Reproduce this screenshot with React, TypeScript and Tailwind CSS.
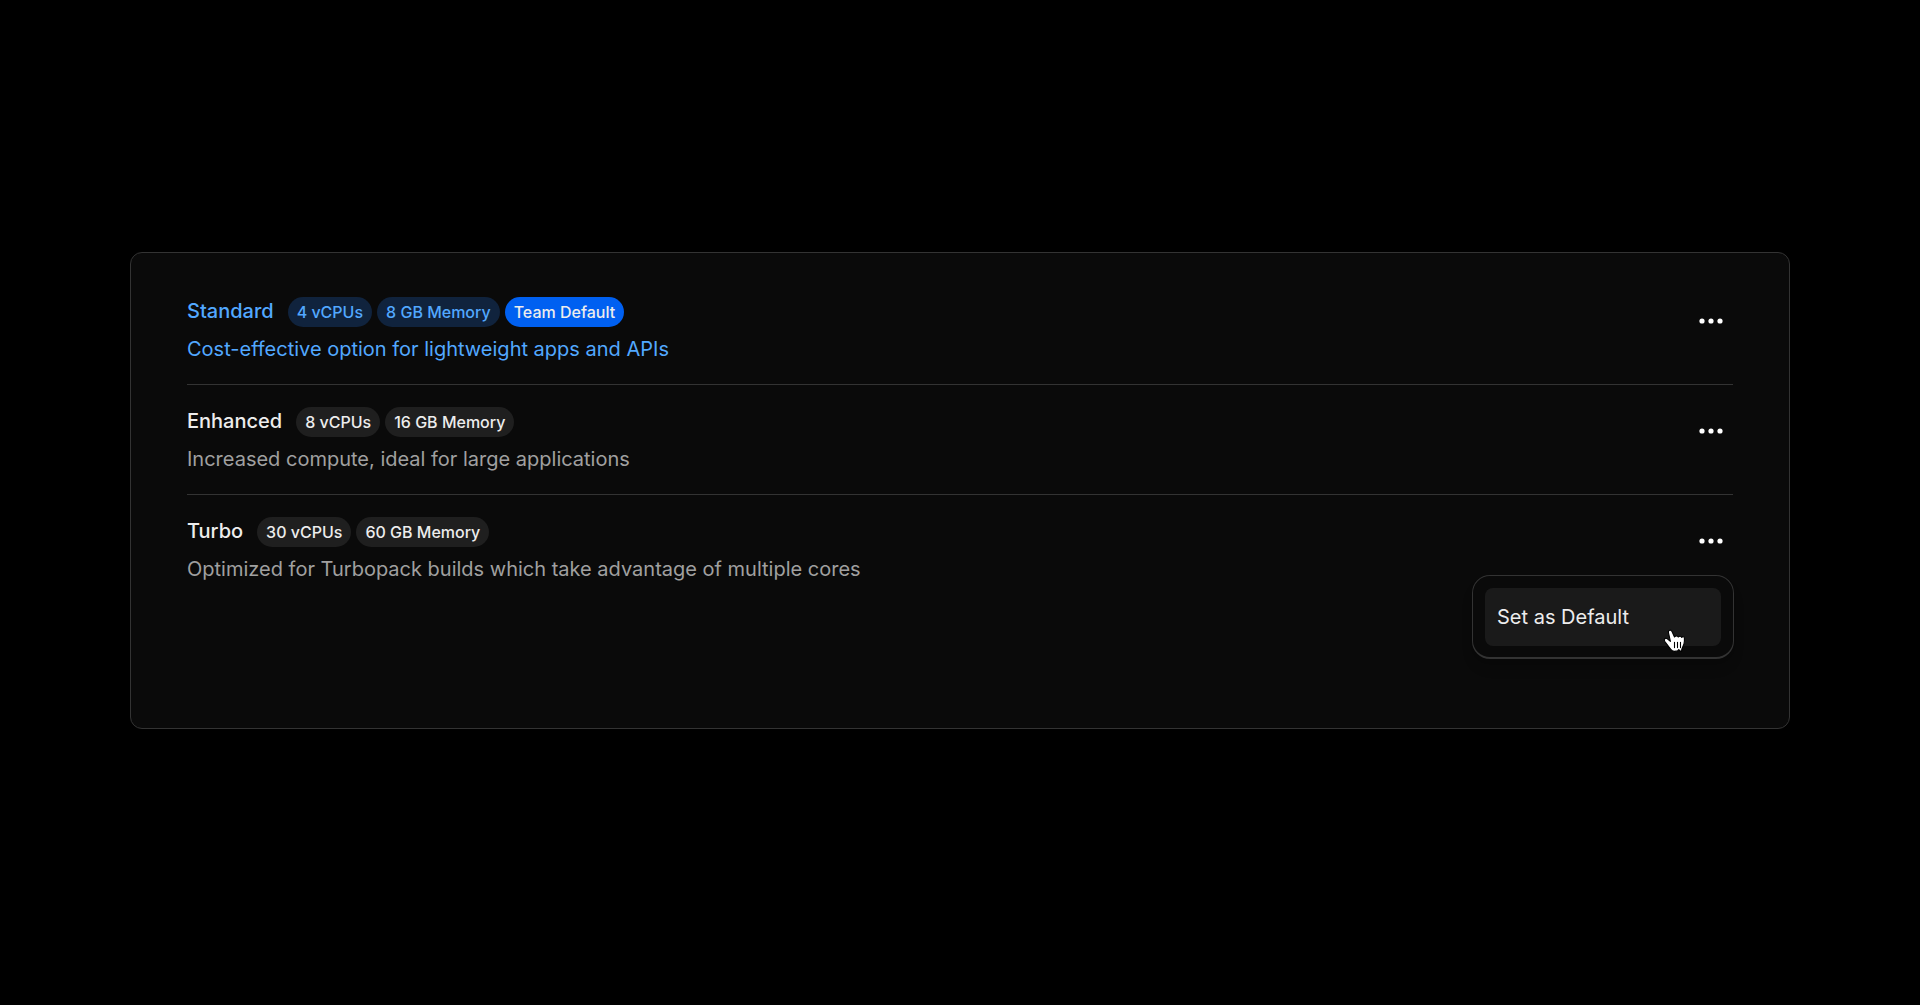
type Plan = {
  name: string;
  specs: string[];
  description: string;
  isDefault?: boolean;
};

const plans: Plan[] = [
  {
    name: "Standard",
    specs: ["4 vCPUs", "8 GB Memory"],
    description: "Cost-effective option for lightweight apps and APIs",
    isDefault: true,
  },
  {
    name: "Enhanced",
    specs: ["8 vCPUs", "16 GB Memory"],
    description: "Increased compute, ideal for large applications",
  },
  {
    name: "Turbo",
    specs: ["30 vCPUs", "60 GB Memory"],
    description: "Optimized for Turbopack builds which take advantage of multiple cores",
  },
];

function DotsIcon() {
  return (
    <svg width="24" height="24" viewBox="0 0 24 24" fill="currentColor" aria-hidden="true">
      <circle cx="3" cy="12" r="2.6" />
      <circle cx="12" cy="12" r="2.6" />
      <circle cx="21" cy="12" r="2.6" />
    </svg>
  );
}

function HandCursor() {
  return (
    <svg
      className="pointer-events-none absolute right-[46px] bottom-[3px] z-20"
      width="24"
      height="26"
      viewBox="0 0 24 26"
      aria-hidden="true"
    >
      <path
        d="M6.6 2.2C5.5 2.5 5.2 3.5 5.5 4.8L7.4 13.4L4.4 10.9C3.3 10 1.8 10.2 1.4 11.2C1 12.1 1.5 13 2.2 14L6.4 19.6C7.3 20.8 8 21.8 9.4 22.8C10.6 23.6 13 23.3 14.6 22.9L15.8 21.6L17.2 23.1H18.6C18.4 21.5 18.9 20.6 19.8 18.8C20.8 16.8 21.4 15 21.4 13V10C21.4 8.6 19.4 8.2 18.7 9.4C18.2 7.9 16 7.8 15.3 9.1C14.7 7.7 12.4 7.6 11.5 9L9 3.6C8.5 2.4 7.6 1.9 6.6 2.2Z"
        fill="#fff"
        stroke="#000"
        strokeWidth="1.1"
        strokeLinejoin="round"
      />
      <path d="M11.5 14.2V19.6M14.5 14.2V19.6M17.5 14.2V19.6" stroke="#000" strokeWidth="1.1" strokeLinecap="round" />
    </svg>
  );
}

function Pill({ label, tone }: { label: string; tone: string }) {
  return (
    <span className={`flex h-[30px] items-center rounded-full px-[9px] text-base font-medium ${tone}`}>{label}</span>
  );
}

function PlanRow({ plan, menuOpen }: { plan: Plan; menuOpen: boolean }) {
  const active = plan.isDefault;
  return (
    <li className="flex items-center justify-between border-b border-[#333] pt-[22px] pb-[21px] last:border-transparent">
      <div>
        <div className="flex items-start gap-3.5">
          <h2 className={`text-xl leading-7 font-medium ${active ? "text-[#52a8ff]" : "text-[#ededed]"}`}>
            {plan.name}
          </h2>
          <div className="flex gap-[5px]">
            {plan.specs.map((spec) => (
              <Pill
                key={spec}
                label={spec}
                tone={active ? "bg-[#10233d] text-[#52a8ff]" : "bg-[#1f1f1f] text-[#ededed]"}
              />
            ))}
            {active && <Pill label="Team Default" tone="bg-[#0060f1] text-[#ededed]" />}
          </div>
        </div>
        <p className={`mt-2 text-xl leading-7 ${active ? "text-[#52a8ff]" : "text-[#a0a0a0]"}`}>
          {plan.description}
        </p>
      </div>
      <div className="relative -mt-[18px] flex">
        <button type="button" aria-label={`Options for ${plan.name}`} className="px-2.5 py-1 text-white">
          <DotsIcon />
        </button>
        {menuOpen && (
          <div className="absolute top-full -right-px z-10 mt-[18px] w-[262px] rounded-[18px] border border-b-2 border-[#333] bg-[#0a0a0a] px-3 pt-3 pb-[11px] shadow-lg">
            <button
              type="button"
              className="block h-[58px] w-full cursor-pointer rounded-lg bg-[#1a1a1a] px-3 text-left text-xl text-[#ededed]"
            >
              Set as Default
            </button>
            <HandCursor />
          </div>
        )}
      </div>
    </li>
  );
}

export default function App() {
  return (
    <main className="min-h-screen bg-black px-[130px] pt-[252px] font-['Inter',sans-serif]">
      <section className="rounded-xl border border-[#333] bg-[#0a0a0a] px-14 pt-[22px] pb-[123px]">
        <ul>
          {plans.map((plan) => (
            <PlanRow key={plan.name} plan={plan} menuOpen={plan.name === "Turbo"} />
          ))}
        </ul>
      </section>
    </main>
  );
}
